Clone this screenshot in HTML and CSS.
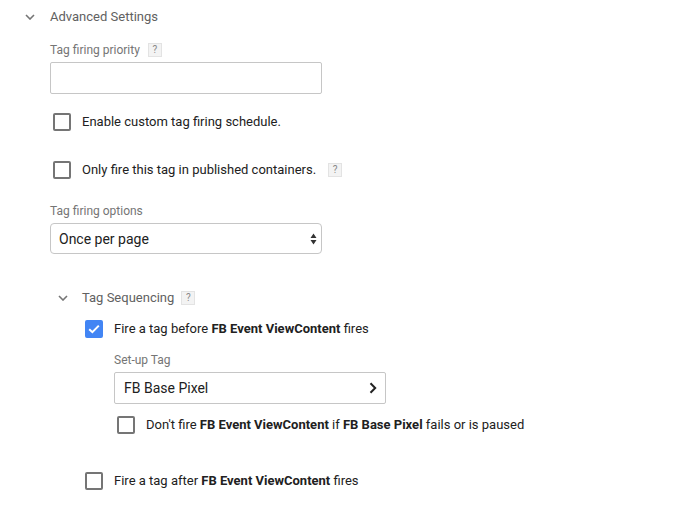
FILE: index.html
```html
<!DOCTYPE html>
<html>
<head>
<meta charset="utf-8">
<link rel="stylesheet" href="styles.css">
</head>
<body>
<div class="page">
  <div class="section-head">
    <svg class="chev" width="10" height="6" viewBox="0 0 10 6"><path d="M1 1 L5 5 L9 1" fill="none" stroke="#757575" stroke-width="1.6"/></svg>
    <span class="head-title">Advanced Settings</span>
  </div>
  <div class="section-body">
    <div class="label">Tag firing priority <span class="help">?</span></div>
    <div class="input"></div>

    <label class="check row1"><span class="box"></span><span class="check-text">Enable custom tag firing schedule.</span></label>
    <label class="check row2"><span class="box"></span><span class="check-text">Only fire this tag in published containers.</span><span class="help help-inline">?</span></label>

    <div class="label label-opt">Tag firing options</div>
    <div class="select"><span>Once per page</span>
      <svg class="updown" width="7" height="12" viewBox="0 0 7 12"><path d="M3.5 0.5 L6.5 5 L0.5 5 Z M0.5 7 L6.5 7 L3.5 11.5 Z" fill="#333"/></svg>
    </div>

    <div class="sub-head">
      <svg class="chev" width="10" height="6" viewBox="0 0 10 6"><path d="M1 1 L5 5 L9 1" fill="none" stroke="#757575" stroke-width="1.6"/></svg>
      <span class="sub-title">Tag Sequencing</span><span class="help">?</span>
    </div>
    <div class="sub-body">
      <label class="check row3"><span class="box checked"><svg width="12" height="10" viewBox="0 0 12 10"><path d="M1.2 5.2 L4.4 8.2 L10.8 1.6" fill="none" stroke="#fff" stroke-width="2"/></svg></span><span class="check-text">Fire a tag before <b>FB Event ViewContent</b> fires</span></label>
      <div class="nested">
        <div class="label label-setup">Set-up Tag</div>
        <div class="picker"><span>FB Base Pixel</span>
          <svg class="arrow" width="8" height="12" viewBox="0 0 8 12"><path d="M1.5 1.2 L6.2 6 L1.5 10.8" fill="none" stroke="#222" stroke-width="2"/></svg>
        </div>
        <label class="check row4"><span class="box"></span><span class="check-text">Don't fire <b>FB Event ViewContent</b> if <b>FB Base Pixel</b> fails or is paused</span></label>
      </div>
      <label class="check row5"><span class="box"></span><span class="check-text">Fire a tag after <b>FB Event ViewContent</b> fires</span></label>
    </div>
  </div>
</div>
</body>
</html>
```

FILE: styles.css
```css
* { box-sizing: border-box; }
html, body { margin: 0; padding: 0; background: #fff; }
body { font-family: Roboto, "Noto Sans", "Liberation Sans", sans-serif; color: #212121; width: 696px; height: 506px; overflow: hidden; }
.page { padding-top: 7px; }
.section-head { display: flex; align-items: center; height: 20px; padding-left: 25px; }
.chev { display: block; flex: none; }
.head-title { margin-left: 15px; font-size: 13px; color: #616161; line-height: 20px; }
.section-body { padding-left: 50px; }
.label { font-size: 12px; color: #757575; line-height: 16px; display: flex; align-items: center; }
.section-body > .label:first-child { margin-top: 15px; }
.help { display: inline-flex; align-items: center; justify-content: center; width: 14px; height: 14px; background: #f3f3f3; border: 1px solid #e3e3e3; color: #888; font-size: 10px; line-height: 1; margin-left: 8px; }
.input { width: 272px; height: 32px; border: 1px solid #c6c6c6; border-radius: 2px; margin-top: 4px; }
.check { display: flex; align-items: center; height: 18px; font-size: 13px; line-height: 18px; }
.box { width: 18px; height: 18px; border: 2px solid #757575; border-radius: 2px; flex: none; display: flex; align-items: center; justify-content: center; }
.box.checked { background: #4285f4; border-color: #4285f4; }
.box svg { display: block; }
.check-text { margin-left: 11px; white-space: nowrap; color: #212121; }
.check-text b { font-weight: 700; color: #212121; }
.row1 { margin-top: 19px; margin-left: 3px; }
.row2 { margin-top: 30px; margin-left: 3px; }
.help-inline { margin-left: 12px; }
.label-opt { margin-top: 24px; }
.select { width: 272px; height: 31px; border: 1px solid #c6c6c6; border-radius: 4px; margin-top: 4px; display: flex; align-items: center; justify-content: space-between; padding: 0 4px 0 8px; font-size: 14px; color: #212121; }
.updown { display: block; }
.sub-head { display: flex; align-items: center; height: 18px; margin-top: 35px; padding-left: 8px; }
.sub-title { margin-left: 14px; font-size: 13px; color: #616161; line-height: 18px; }
.sub-head .help { margin-left: 7px; }
.sub-body { padding-left: 35px; }
.row3 { margin-top: 13px; }
.nested { padding-left: 29px; }
.label-setup { margin-top: 14px; }
.picker { width: 272px; height: 32px; border: 1px solid #c6c6c6; border-radius: 2px; margin-top: 4px; display: flex; align-items: center; justify-content: space-between; padding: 0 8px 0 9px; font-size: 14px; color: #212121; }
.arrow { display: block; }
.row4 { margin-top: 12px; margin-left: 3px; }
.row5 { margin-top: 38px; }
```
